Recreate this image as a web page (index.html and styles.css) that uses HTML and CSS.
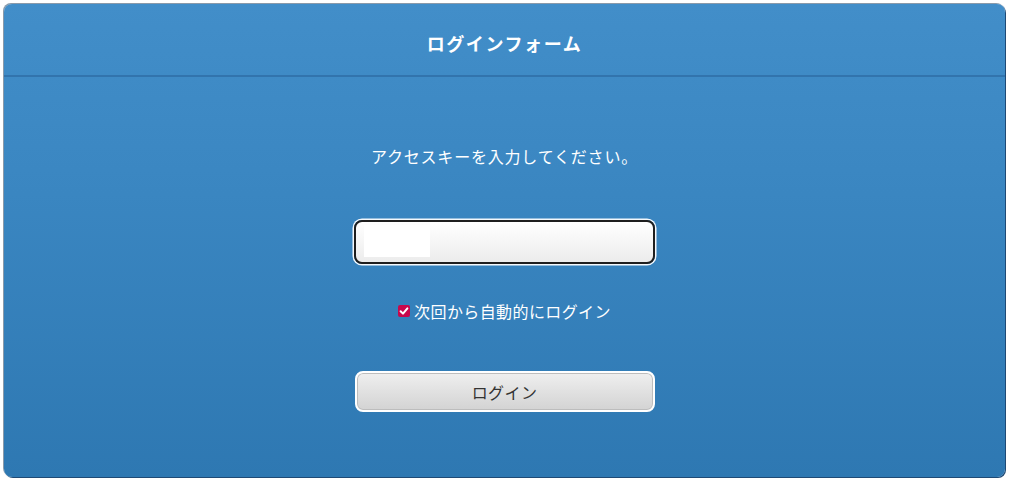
FILE: index.html
```html
<!DOCTYPE html>
<html lang="ja">
<head>
<meta charset="utf-8">
<title>ログインフォーム</title>
<link rel="stylesheet" href="styles.css">
</head>
<body>
<div class="panel">
  <div class="panel-header">ログインフォーム</div>
  <form class="panel-body">
    <p class="prompt">アクセスキーを入力してください。</p>
    <div class="field"><span class="field-fill"></span></div>
    <label class="remember"><span class="check"><svg width="12" height="12" viewBox="0 0 12 12"><path d="M2.6 6.2 L5 8.6 L9.4 3.4" fill="none" stroke="#fff" stroke-width="2" stroke-linecap="round" stroke-linejoin="round"/></svg></span>次回から自動的にログイン</label>
    <div class="button">ログイン</div>
  </form>
</div>
</body>
</html>
```
FILE: styles.css
```css
html, body {
  margin: 0;
  padding: 0;
  background: #fff;
}
body {
  padding: 4px;
  font-family: "Noto Sans CJK JP", "Noto Sans", sans-serif;
}
.panel {
  height: 473px;
  border-radius: 8px;
  background: linear-gradient(to bottom, #428ec9 0%, #3a86c1 40%, #2e78b2 100%);
  box-shadow: -1px -1px 0 #8a9aaa, 1px 1px 0 #1f4a75, 0 0 1px #244f7a;
  display: flex;
  flex-direction: column;
  overflow: hidden;
}
.panel-header {
  height: 73px;
  border-bottom: 2px solid #3274ad;
  display: flex;
  align-items: center;
  justify-content: center;
  color: #fff;
  font-size: 18px;
  font-weight: bold;
  letter-spacing: 1.6px;
  box-sizing: border-box;
  padding-top: 6px;
}
.panel-body {
  display: flex;
  flex-direction: column;
  align-items: center;
  padding-top: 67px;
  margin: 0;
}
.prompt {
  margin: 0;
  color: #fff;
  font-size: 16px;
  line-height: 24px;
  letter-spacing: 0.8px;
}
.field {
  margin-top: 52px;
  width: 297px;
  height: 40px;
  border: 2px solid #1e1e1e;
  border-radius: 8px;
  background: linear-gradient(to bottom, #ffffff, #ececec);
  box-shadow: 0 0 0 1.5px #f4f8fc;
  position: relative;
  overflow: hidden;
}
.field-fill {
  position: absolute;
  left: 8px;
  top: 3px;
  width: 66px;
  height: 32px;
  background: #fff;
}
.remember {
  margin-top: 35px;
  display: flex;
  align-items: center;
  color: #fff;
  font-size: 16px;
  line-height: 24px;
  letter-spacing: 0.4px;
}
.check {
  width: 12px;
  height: 12px;
  border-radius: 2px;
  background: #c8084c;
  margin-right: 4px;
  display: flex;
}
.button {
  margin-top: 48px;
  width: 296px;
  height: 37px;
  border: 2px solid #fff;
  border-radius: 8px;
  background: linear-gradient(to bottom, #efefef, #d3d3d3);
  box-shadow: inset 0 0 0 1px #bdbdbd;
  color: #333;
  font-size: 16px;
  letter-spacing: 0.4px;
  display: flex;
  align-items: center;
  justify-content: center;
}
```
